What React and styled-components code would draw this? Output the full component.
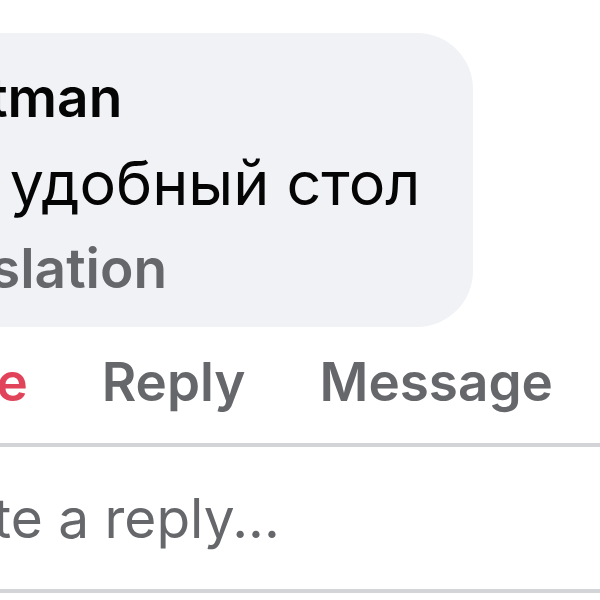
import React from 'react';
import styled, { createGlobalStyle } from 'styled-components';

const GlobalStyle = createGlobalStyle`
  html, body {
    margin: 0;
    padding: 0;
    background: #ffffff;
    overflow: hidden;
  }
  body {
    font-family: Inter, "Noto Sans", "DejaVu Sans", sans-serif;
    -webkit-font-smoothing: antialiased;
  }
`;

const Frame = styled.div`
  width: 600px;
  height: 600px;
  overflow: hidden;
`;

const Thread = styled.div`
  margin-left: -156px;
  width: 1000px;
  padding-top: 33px;
`;

const Bubble = styled.div`
  display: inline-block;
  background: #f0f2f5;
  border-radius: 56px;
  padding: 32px 53px 27px 40px;
`;

const Author = styled.div`
  font-size: 55px;
  line-height: 64px;
  font-weight: 600;
  color: #050505;
  white-space: nowrap;
`;

const Body = styled.div`
  margin-top: 18px;
  font-size: 61px;
  line-height: 72px;
  font-weight: 400;
  color: #050505;
  white-space: nowrap;
`;

const TranslateLink = styled.div`
  margin-top: 17px;
  font-size: 55px;
  line-height: 64px;
  font-weight: 600;
  color: #65676b;
  white-space: nowrap;
`;

const Actions = styled.div`
  display: flex;
  gap: 74px;
  margin-top: 23px;
  padding-left: 61px;
`;

const Action = styled.span`
  font-size: 53px;
  line-height: 64px;
  font-weight: 600;
  color: ${p => (p.$active ? '#e0435a' : '#65676b')};
  white-space: nowrap;
`;

const ReplyBox = styled.div`
  margin-top: 29px;
  border-top: 4px solid #d3d4d8;
  border-bottom: 4px solid #d3d4d8;
  padding: 37px 0 37px 62px;
`;

const Placeholder = styled.div`
  font-size: 55px;
  line-height: 68px;
  font-weight: 400;
  color: #65676b;
  white-space: nowrap;
`;

export default function App() {
  return (
    <Frame>
      <GlobalStyle />
      <Thread>
        <Bubble>
          <Author>Whitman</Author>
          <Body>Это удобный стол</Body>
          <TranslateLink>translation</TranslateLink>
        </Bubble>
        <Actions>
          <Action $active>Love</Action>
          <Action>Reply</Action>
          <Action>Message</Action>
        </Actions>
        <ReplyBox>
          <Placeholder>Write a reply...</Placeholder>
        </ReplyBox>
      </Thread>
    </Frame>
  );
}
